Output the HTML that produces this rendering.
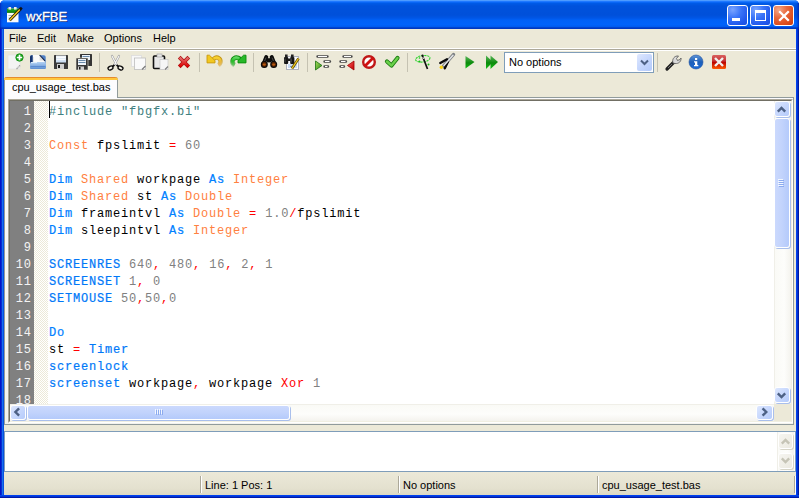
<!DOCTYPE html>
<html><head><meta charset="utf-8">
<style>
*{margin:0;padding:0;box-sizing:border-box}
html,body{width:799px;height:498px;overflow:hidden;background:#fff}
body{position:relative;font-family:"Liberation Sans",sans-serif;font-size:11px;color:#000}
.a{position:absolute}
#frame{left:0;top:0;width:799px;height:498px;border-radius:5px 5px 0 0;background:linear-gradient(90deg,#0014c8 0,#0014c8 1px,#0a2cd0 1px,#0a2cd0 2px,#1670ee 2px,#1670ee 3px,#0850e0 3px,#0850e0 796px,#0040f0 796px,#0040f0 797px,#0034d0 797px,#0034d0 798px,#0018a0 798px)}
#fbot{left:0;top:495px;width:799px;height:3px;background:linear-gradient(180deg,#0040f0 0,#0040f0 1px,#0034d4 1px,#0034d4 2px,#0018a8 2px)}
#title{left:0;top:0;width:799px;height:29px;border-radius:5px 5px 0 0;
background:linear-gradient(180deg,#4d9bff 0,#4d9bff 1px,#1e78ff 1px,#1e78ff 2px,#0866f5 2px,#0866f5 3px,#005ce8 3px,#0052dc 6px,#0050da 15px,#0056e6 18px,#0060f6 20px,#0063fb 25px,#005cf0 26px,#005cf0 27px,#0044d0 27px,#0044d0 28px,#0038c0 28px)}
#client{left:4px;top:29px;width:792px;height:466px;background:#ece9d8}
#ttext{left:26px;top:8.5px;font-size:13px;line-height:16px;color:#fff;-webkit-text-stroke:0.3px #fff;text-shadow:1px 1px 0 #0a1e6a}
.cbtn{top:5px;width:21px;height:21px;border:1px solid #fff;border-radius:3px}
.menu{top:32px;height:12px;line-height:12px}
.sep{top:53px;width:1px;height:19px;background:#c5c2b2}
.code{font-family:"Liberation Mono",monospace;font-size:12px;letter-spacing:0.8px;line-height:17px;white-space:pre}
.ln{font-family:"Liberation Mono",monospace;font-size:12px;letter-spacing:0.8px;line-height:17px;color:#f4f4f4;text-align:right;white-space:pre}
.kw{color:#0080ff;-webkit-text-stroke:0.2px #0080ff}.ty{color:#ff8040}.op{color:#ff0000}.nu{color:#808080}.pp{color:#408080}.fn{color:#0078f8;-webkit-text-stroke:0.2px #0078f8}
.sbtn{border:1px solid #fff;border-radius:3px;background:linear-gradient(135deg,#dde7fe 0,#c9d9fd 45%,#b5cbfb 100%);box-shadow:1px 1px 0 #a9bfec}
.sthumb{border:1px solid #fff;border-radius:3px;background:linear-gradient(90deg,#cbd9fd,#c2d3fc 50%,#b4cafb);box-shadow:1px 1px 0 #a9bfec}
.dbtn{border:1px solid #fff;border-radius:3px;background:linear-gradient(135deg,#f6f5f0,#ebe9e0);box-shadow:1px 1px 0 #d6d4c6}
</style></head><body>
<div id="frame" class="a"></div>
<div id="title" class="a"></div>
<div id="client" class="a"></div>
<div class="a" style="left:0;top:3px;width:4px;height:26px;background:linear-gradient(90deg,rgba(0,24,176,.75),rgba(0,30,190,.35) 1px,rgba(0,40,200,.15) 2px,rgba(0,0,0,0) 4px)"></div>
<div class="a" style="left:795px;top:3px;width:4px;height:26px;background:linear-gradient(90deg,rgba(0,0,0,0),rgba(0,40,200,.2) 2px,rgba(0,24,160,.7) 4px)"></div>
<div id="fbot" class="a"></div>
<!-- title icon -->
<svg class="a" style="left:0;top:0" width="30" height="29">
<rect x="7" y="8.5" width="11.5" height="13.8" fill="#fafafa"/>
<rect x="7" y="8.5" width="11.5" height="4.2" fill="#1c9c1c"/>
<rect x="7" y="11.5" width="11.5" height="1.2" fill="#0e7a0e"/>
<rect x="8.5" y="7" width="2.6" height="2.6" fill="#f0ece4"/><rect x="14" y="7" width="2.6" height="2.6" fill="#f0ece4"/>
<path d="M8.5 15.5h5M8.5 18h3" stroke="#9aa" stroke-width="0.8"/>
<path d="M9.6 20.2 L20.8 8.6" stroke="#1a1400" stroke-width="3"/>
<path d="M9.6 20.2 L20.8 8.6" stroke="#f4c820" stroke-width="1.5"/>
<path d="M19.8 9.6 L21.8 7.6" stroke="#111" stroke-width="2.6"/>
</svg>
<div id="ttext" class="a">wxFBE</div>

<!-- caption buttons -->
<div class="a cbtn" style="left:727px;background:radial-gradient(circle at 25% 20%,#7aa4ff 0,#3a74f8 40%,#2158ec 75%,#1a4fe0)"><div class="a" style="left:4px;top:12px;width:8px;height:3px;background:#fff"></div></div>
<div class="a cbtn" style="left:750px;background:radial-gradient(circle at 25% 20%,#7aa4ff 0,#3a74f8 40%,#2158ec 75%,#1a4fe0)"><div class="a" style="left:4px;top:4px;width:11px;height:11px;border:1px solid #fff;border-top-width:3px"></div></div>
<div class="a cbtn" style="left:773px;background:radial-gradient(circle at 25% 20%,#f4a888 0,#e8683c 40%,#dc4c1c 75%,#c83c10)">
<svg class="a" style="left:4px;top:4px" width="12" height="12"><path d="M1.2 1.2L10.8 10.8M10.8 1.2L1.2 10.8" stroke="#fff" stroke-width="2.3"/></svg></div>

<!-- menu -->
<div class="a menu" style="left:9px">File</div>
<div class="a menu" style="left:37px">Edit</div>
<div class="a menu" style="left:67px">Make</div>
<div class="a menu" style="left:104px">Options</div>
<div class="a menu" style="left:153px">Help</div>
<div class="a" style="left:4px;top:48px;width:792px;height:1px;background:#fff"></div>
<div class="a" style="left:4px;top:49px;width:792px;height:1px;background:#aca899"></div>
<div class="a" style="left:4px;top:50px;width:792px;height:1px;background:#fff"></div>

<!-- toolbar separators -->
<div class="a sep" style="left:99px"></div>
<div class="a sep" style="left:199px"></div>
<div class="a sep" style="left:253px"></div>
<div class="a sep" style="left:307px"></div>
<div class="a sep" style="left:407px"></div>
<div class="a sep" style="left:657px"></div>

<!-- combobox -->
<div class="a" style="left:504px;top:52px;width:150px;height:21px;border:1px solid #7f9db9;background:#fff"></div>
<div class="a" style="left:509px;top:56px;line-height:13px">No options</div>
<div class="a" style="left:637px;top:54px;width:15px;height:17px;border-radius:2px;background:linear-gradient(135deg,#dfe8fe 0,#c6d7fd 50%,#b3cafb 100%)"></div>
<svg class="a" style="left:640px;top:59px" width="9" height="7"><path d="M1 1.5L4.5 5L8 1.5" stroke="#4d6185" stroke-width="2" fill="none"/></svg>
<svg class="a" style="left:0;top:0" width="799" height="80" viewBox="0 0 799 80">
<defs>
<linearGradient id="gBlueTray" x1="0" y1="0" x2="0" y2="1"><stop offset="0" stop-color="#b4d2f4"/><stop offset="1" stop-color="#5d8fd2"/></linearGradient>
<linearGradient id="gLabel" x1="0" y1="0" x2="0" y2="1"><stop offset="0" stop-color="#f6f9fc"/><stop offset="1" stop-color="#c5daf0"/></linearGradient>
<linearGradient id="gGreen" x1="0" y1="0" x2="0" y2="1"><stop offset="0" stop-color="#7ccf6a"/><stop offset="1" stop-color="#1b9e12"/></linearGradient>
<linearGradient id="gPlay" x1="0" y1="0" x2="0" y2="1"><stop offset="0" stop-color="#5cb85c"/><stop offset=".55" stop-color="#0c8a0c"/><stop offset="1" stop-color="#11c011"/></linearGradient>
<linearGradient id="gRed" x1="0" y1="0" x2="0" y2="1"><stop offset="0" stop-color="#e07070"/><stop offset="1" stop-color="#e00000"/></linearGradient>
<linearGradient id="gRedBox" x1="0" y1="0" x2="0" y2="1"><stop offset="0" stop-color="#d96060"/><stop offset=".45" stop-color="#c43030"/><stop offset=".5" stop-color="#b80000"/><stop offset="1" stop-color="#ff5a00"/></linearGradient>
<linearGradient id="gInfo" x1="0" y1="0" x2="0" y2="1"><stop offset="0" stop-color="#5f95d8"/><stop offset=".5" stop-color="#1d5fb8"/><stop offset="1" stop-color="#1a6ad8"/></linearGradient>
<linearGradient id="gYel" x1="0" y1="0" x2="0" y2="1"><stop offset="0" stop-color="#fff070"/><stop offset="1" stop-color="#e0b010"/></linearGradient>
<linearGradient id="gRedTri" x1="0" y1="0" x2="1" y2="1"><stop offset="0" stop-color="#ff6060"/><stop offset="1" stop-color="#c00000"/></linearGradient>
<linearGradient id="gGreenTri" x1="0" y1="0" x2="1" y2="1"><stop offset="0" stop-color="#a8dd60"/><stop offset="1" stop-color="#2a8a10"/></linearGradient>
</defs>
<!-- new -->
<rect x="8" y="55" width="12" height="14" fill="#f3f3f3" stroke="#e0e0e0" stroke-width="0.6"/>
<path d="M16.5 69 L20 65.5" stroke="#8a8a8a" stroke-width="1.2"/>
<path d="M17 68.5 L19.5 66" stroke="#fff" stroke-width="1"/>
<circle cx="19.5" cy="57.5" r="3.7" fill="#1fa51f" stroke="#0b8a0b" stroke-width="0.8"/>
<path d="M16.8 57.5h5.4M19.5 54.8v5.4" stroke="#fff" stroke-width="1.7"/>
<!-- open -->
<rect x="30" y="55.3" width="15.7" height="13.7" rx="1.8" fill="#4f80c6"/>
<path d="M30 64 V57 Q30 55.3 31.8 55.3 H32.8 V64 Z" fill="#173670"/>
<path d="M32.8 55 H39.6 L44.8 60.6 V63 H32.8 Z" fill="#fbfbfb"/>
<path d="M39.6 55.2 V60.6 H44.6 Z" fill="#dcdcdc"/>
<path d="M39.6 55 L45 60.8" stroke="#0e1e44" stroke-width="1.1"/>
<path d="M33.5 57v5" stroke="#e4e4e4" stroke-width="0.8"/>
<rect x="30" y="62" width="16" height="7" rx="1.6" fill="url(#gBlueTray)"/>
<path d="M31 62.6h6" stroke="#e4f2ff" stroke-width="1"/>
<path d="M30.5 66.5h15" stroke="#5a8ad0" stroke-width="1"/>
<!-- save -->
<rect x="54" y="55" width="14" height="14" rx="0.6" fill="#3a3a3a"/>
<rect x="56" y="55.5" width="10" height="7" fill="url(#gLabel)"/>
<path d="M56.5 57.5h9M56.5 59.5h9" stroke="#ffffff" stroke-width="0.8"/>
<rect x="57" y="64" width="7" height="5" fill="#cfcfcf"/>
<rect x="58" y="65" width="2" height="3" fill="#1a1a1a"/>
<!-- save all -->
<rect x="80" y="54" width="12" height="12" rx="0.5" fill="#363636"/>
<rect x="82" y="55" width="8" height="5" fill="#eef4fa"/>
<path d="M82.5 56.5h7" stroke="#6a8aaa" stroke-width="1"/>
<rect x="76" y="58" width="12" height="12" rx="0.5" fill="#363636" stroke="#eceadb" stroke-width="0.6"/>
<rect x="78" y="59" width="8" height="6" fill="#eef4fa"/>
<path d="M78.5 60.5h7M78.5 62.5h7" stroke="#6a8aaa" stroke-width="1"/>
<rect x="78" y="66.5" width="6" height="3.5" fill="#cfcfcf"/>
<rect x="79" y="67" width="1.5" height="2.5" fill="#1a1a1a"/>
<!-- cut -->
<path d="M112 56 L116.5 64.5 M119 56 L114.5 64.5" stroke="#9a9a9a" stroke-width="2.2" stroke-linecap="round"/>
<path d="M112 56 L116.5 64.5 M119 56 L114.5 64.5" stroke="#fafafa" stroke-width="1.1" stroke-linecap="round"/>
<ellipse cx="110.5" cy="68" rx="2.6" ry="1.8" fill="#f4f2e8" stroke="#0a0a0a" stroke-width="1.3" transform="rotate(-25 110.5 68)"/>
<ellipse cx="120.5" cy="68" rx="2.6" ry="1.8" fill="#f4f2e8" stroke="#0a0a0a" stroke-width="1.3" transform="rotate(25 120.5 68)"/>
<path d="M112.5 66.5 L114.5 65 M118.5 66.5 L116.5 65" stroke="#0a0a0a" stroke-width="1.6"/>
<!-- copy -->
<rect x="131.5" y="55.5" width="10" height="11" fill="#f8f8f8" stroke="#dcdcdc" stroke-width="0.8"/>
<rect x="134.5" y="58" width="11" height="11.5" fill="#fafafa" stroke="#bdbdbd" stroke-width="0.8"/>
<path d="M142 69.5 L145.5 66" stroke="#7a7a7a" stroke-width="1.2"/>
<!-- paste -->
<rect x="153.5" y="56" width="11" height="12.5" rx="1" fill="#e8e8e8" stroke="#101010" stroke-width="1.6"/>
<rect x="157" y="54" width="5" height="3" fill="#e6e6e6" stroke="#9a9a9a" stroke-width="0.6"/>
<rect x="160" y="59.5" width="8" height="10" fill="#f6f6f6" stroke="#c8c8c8" stroke-width="0.7"/>
<path d="M165 69.5 L168 66.5" stroke="#7a7a7a" stroke-width="1.1"/>
<!-- delete -->
<path d="M179.2 57.2 L188.8 66.8 M188.8 57.2 L179.2 66.8" stroke="#b01010" stroke-width="3.8"/>
<path d="M179.6 57.6 L188.4 66.4 M188.4 57.6 L179.6 66.4" stroke="url(#gRed)" stroke-width="2.4"/>
<!-- undo -->
<linearGradient id="gUndoFade" gradientUnits="userSpaceOnUse" x1="0" y1="58" x2="0" y2="68"><stop offset="0" stop-color="#c49410"/><stop offset="1" stop-color="#c49410" stop-opacity="0.15"/></linearGradient>
<linearGradient id="gUndoFill" gradientUnits="userSpaceOnUse" x1="0" y1="58" x2="0" y2="68"><stop offset="0" stop-color="#f6d030"/><stop offset="1" stop-color="#f0a040" stop-opacity="0.2"/></linearGradient>
<path d="M212.54 61.04 A4 4 0 1 1 218.38 65.13" fill="none" stroke="url(#gUndoFade)" stroke-width="4.4"/>
<path d="M212.54 61.04 A4 4 0 1 1 218.38 65.13" fill="none" stroke="url(#gUndoFill)" stroke-width="2.6"/>
<path d="M207 55.2 H209.4 L215 60.6 V62.9 H207 Z" fill="#f2c820" stroke="#c89810" stroke-width="0.9"/>
<!-- redo -->
<linearGradient id="gRedoFade" gradientUnits="userSpaceOnUse" x1="0" y1="58" x2="0" y2="68"><stop offset="0" stop-color="#0a8e0a"/><stop offset="1" stop-color="#0a8e0a" stop-opacity="0.1"/></linearGradient>
<linearGradient id="gRedoFill" gradientUnits="userSpaceOnUse" x1="0" y1="56" x2="0" y2="68"><stop offset="0" stop-color="#7ee07e"/><stop offset=".4" stop-color="#22c022"/><stop offset="1" stop-color="#60c060" stop-opacity="0.15"/></linearGradient>
<path d="M240.46 61.04 A4 4 0 1 0 234.62 65.13" fill="none" stroke="url(#gRedoFade)" stroke-width="4.6"/>
<path d="M240.46 61.04 A4 4 0 1 0 234.62 65.13" fill="none" stroke="url(#gRedoFill)" stroke-width="2.8"/>
<path d="M246 55.2 H243.6 L238 60.6 V62.9 H246 Z" fill="#28b828" stroke="#0a8a0a" stroke-width="0.9"/>
<!-- find -->
<path d="M266.3 57 L263.8 63.5 M271.7 57 L274.2 63.5" stroke="#0c0c0c" stroke-width="4" stroke-linecap="round"/>
<path d="M266 57.6 L264.6 61 M272 57.6 L273.4 61" stroke="#5a5a5a" stroke-width="0.8"/>
<rect x="267" y="58.2" width="4" height="4.2" fill="#0c0c0c"/>
<circle cx="264.3" cy="64.4" r="2.9" fill="#5e2600" stroke="#0c0c0c" stroke-width="1.2"/>
<circle cx="273.7" cy="64.4" r="2.9" fill="#5e2600" stroke="#0c0c0c" stroke-width="1.2"/>
<ellipse cx="264.3" cy="64.6" rx="1.6" ry="1.1" fill="#b85a12"/>
<ellipse cx="273.7" cy="64.6" rx="1.6" ry="1.1" fill="#b85a12"/>
<!-- replace -->
<rect x="286.5" y="56.5" width="12" height="13" fill="#fafafe" stroke="#a8acb8" stroke-width="0.9"/>
<rect x="288" y="64" width="9" height="4" fill="#c8dcf4"/>
<path d="M290 66.5h5" stroke="#7a8aa0" stroke-width="0.8"/>
<rect x="284" y="57" width="4.2" height="7" rx="1" fill="#141414"/>
<rect x="290.2" y="57" width="4.2" height="7" rx="1" fill="#141414"/>
<rect x="285" y="54.5" width="2.6" height="3" fill="#222"/>
<rect x="291" y="54.5" width="2.6" height="3" fill="#222"/>
<rect x="287.5" y="58.5" width="3.2" height="2.5" fill="#1a1a1a"/>
<path d="M285 58.5v4M291.2 58.5v4" stroke="#666" stroke-width="0.7"/>
<path d="M292 68.5 L298.5 58.5" stroke="#5a4600" stroke-width="2.6"/>
<path d="M292 68.5 L298.5 58.5" stroke="#f2cc22" stroke-width="1.3"/>
<!-- block comment -->
<path d="M317.5 56.5h10M324.5 61.5h5.5M324.5 66.5h3.5" stroke="#4a4a4a" stroke-width="2.4" stroke-linecap="round"/>
<path d="M318 56.5h9M325 61.5h4.5M325 66.5h2.5" stroke="#fff" stroke-width="1"/>
<path d="M315.5 61 L322 65.5 L315.5 70 Z" fill="url(#gGreenTri)" stroke="#1a7010" stroke-width="0.8"/>
<!-- uncomment -->
<path d="M343.5 56.5h8M340.5 61.5h5.5M340.5 66.5h3.5" stroke="#4a4a4a" stroke-width="2.4" stroke-linecap="round"/>
<path d="M344 56.5h7M341 61.5h4.5M341 66.5h2.5" stroke="#fff" stroke-width="1"/>
<path d="M354 61 L347.5 65.5 L354 70 Z" fill="url(#gRedTri)" stroke="#a00000" stroke-width="0.8"/>
<!-- stop -->
<circle cx="369" cy="62" r="5.8" fill="#fff" stroke="#c01818" stroke-width="2.4"/>
<path d="M365 66 L373 58" stroke="#d01010" stroke-width="2.8"/>
<!-- check -->
<path d="M387 61.5 L391.5 65.5 L397.5 58" fill="none" stroke="#1a7a10" stroke-width="4.2" stroke-linecap="round" stroke-linejoin="round"/>
<path d="M387 61.5 L391.5 65.5 L397.5 58" fill="none" stroke="#6ad04a" stroke-width="2.4" stroke-linecap="round" stroke-linejoin="round"/>
<!-- wand -->
<ellipse cx="422.8" cy="58.8" rx="7.2" ry="3.2" fill="none" stroke="#2ed42e" stroke-width="1.1" stroke-dasharray="2.2 0.8" transform="rotate(-8 422.8 58.8)"/>
<path d="M422.5 56 L427.5 69" stroke="#111" stroke-width="1.7"/>
<path d="M422.8 57 L423.6 59" stroke="#ddd" stroke-width="1"/>
<circle cx="422.5" cy="55.5" r="1.1" fill="#111"/>
<circle cx="419.5" cy="61.5" r="1" fill="#18c018"/>
<circle cx="428.5" cy="64.5" r="1" fill="#18c018"/>
<circle cx="419.5" cy="58" r="0.8" fill="#18c018"/>
<!-- rocket -->
<path d="M443.5 66 L453.5 54.5" stroke="#7a7e82" stroke-width="3.4" stroke-linecap="round"/>
<path d="M440.3 63 L447 59.3" stroke="#0a0a0a" stroke-width="2.4" stroke-linecap="round"/>
<path d="M444.8 68.3 L448 61.5" stroke="#0a0a0a" stroke-width="2.4" stroke-linecap="round"/>
<path d="M444 65.5 L453 55.2" stroke="#e2e4e6" stroke-width="1.5" stroke-linecap="round"/>
<circle cx="441.3" cy="67.3" r="1.7" fill="#f8d010"/>
<!-- play -->
<path d="M465.5 56 L474.5 62 L465.5 68.5 Z" fill="url(#gPlay)"/>
<!-- ff -->
<path d="M486 55.5 L493 62 L486 69 Z" fill="url(#gPlay)"/>
<path d="M490.5 55.5 L498 62 L490.5 69 Z" fill="url(#gPlay)"/>
<!-- wrench -->
<path d="M667 69 L674 62" stroke="#222" stroke-width="3.2" stroke-linecap="round"/>
<path d="M668 68 L672 64" stroke="#777" stroke-width="1"/>
<path d="M673 63 C 672 60, 673.5 56.5, 677 56 L678.5 56 L676.5 58.5 L677.5 60.5 L680 59.5 L681 58 C 681.5 61, 679 64, 675 63.5 Z" fill="#d8d8d8" stroke="#555" stroke-width="0.8"/>
<!-- info -->
<circle cx="696" cy="62" r="7" fill="url(#gInfo)" stroke="#2050a0" stroke-width="0.6"/>
<rect x="695" y="58" width="2.2" height="2" fill="#fff"/>
<path d="M694 61.3 H697.3 V65 H698.3 V66.3 H694 V65 H695 V62.5 H694 Z" fill="#fff"/>
<!-- red x box -->
<rect x="712" y="55" width="14" height="14" rx="1.5" fill="url(#gRedBox)"/>
<path d="M715 58 L723 66 M723 58 L715 66" stroke="#f0f0f0" stroke-width="2.4"/>
</svg>
<!-- tab page -->
<div class="a" style="left:4px;top:97px;width:790px;height:328px;background:linear-gradient(180deg,#fcfcfe,#f4f3ee);border:1px solid #919b9c"></div>
<div class="a" style="left:4px;top:77px;width:114px;height:21px;background:#fcfcfe;border-left:1px solid #919b9c;border-right:1px solid #919b9c;border-radius:3px 3px 0 0"></div>
<div class="a" style="left:4px;top:77px;width:114px;height:3px;background:linear-gradient(#e68b2c 0,#e68b2c 1px,#ffc73c 1px);border-radius:3px 3px 0 0"></div>
<div class="a" style="left:12px;top:81px;line-height:12px">cpu_usage_test.bas</div>

<!-- editor -->
<div class="a" style="left:8px;top:99px;width:785px;height:324px;border:1px solid;border-color:#aca899 #fff #fff #aca899"></div>
<div class="a" style="left:9px;top:100px;width:783px;height:322px;border:1px solid;border-color:#716f64 #f1efe2 #f1efe2 #716f64;background:#fff;overflow:hidden">
  <div class="a" style="left:0;top:0;width:24px;height:320px;background:#808080"></div>
  <div class="a" style="left:24px;top:0;width:14px;height:320px;background:repeating-conic-gradient(#ece9d8 0 25%,#fff 0 50%) 0 0/2px 2px"></div>
  <div class="a ln" style="left:0;top:2.5px;width:21.8px">1
2
3
4
5
6
7
8
9
10
11
12
13
14
15
16
17
18</div>
  <div class="a code" style="left:39px;top:2.5px"><span class="pp">#include "fbgfx.bi"</span>

<span class="ty">Const</span> fpslimit <span class="op">=</span> <span class="nu">60</span>

<span class="kw">Dim</span> <span class="ty">Shared</span> workpage <span class="kw">As</span> <span class="ty">Integer</span>
<span class="kw">Dim</span> <span class="ty">Shared</span> st <span class="kw">As</span> <span class="ty">Double</span>
<span class="kw">Dim</span> frameintvl <span class="kw">As</span> <span class="ty">Double</span> <span class="op">=</span> <span class="nu">1.0</span><span class="op">/</span>fpslimit
<span class="kw">Dim</span> sleepintvl <span class="kw">As</span> <span class="ty">Integer</span>

<span class="fn">SCREENRES</span> <span class="nu">640</span><span class="op">,</span> <span class="nu">480</span><span class="op">,</span> <span class="nu">16</span><span class="op">,</span> <span class="nu">2</span><span class="op">,</span> <span class="nu">1</span>
<span class="fn">SCREENSET</span> <span class="nu">1</span><span class="op">,</span> <span class="nu">0</span>
<span class="fn">SETMOUSE</span> <span class="nu">50</span><span class="op">,</span><span class="nu">50</span><span class="op">,</span><span class="nu">0</span>

<span class="kw">Do</span>
st <span class="op">=</span> <span class="fn">Timer</span>
<span class="fn">screenlock</span>
<span class="fn">screenset</span> workpage<span class="op">,</span> workpage <span class="op">Xor</span> <span class="nu">1</span>
</div>
  <div class="a" style="left:39px;top:0;width:1px;height:17px;background:#000"></div>
</div>

<!-- scrollbars (page coords) -->
<div class="a" style="left:774px;top:101px;width:17px;height:303px;background:linear-gradient(90deg,#f0efe8 0,#f0efe8 1px,#fafaf6 1px,#fdfdfb 60%,#f4f3ee)"></div>
<div class="a" style="left:10px;top:404px;width:764px;height:17px;background:linear-gradient(180deg,#f0efe8 0,#f0efe8 1px,#fafaf6 1px,#fdfdfb 60%,#f4f3ee)"></div>
<div class="a" style="left:774px;top:404px;width:17px;height:17px;background:#ece9d8"></div>
<div class="a sbtn" style="left:774px;top:101px;width:16px;height:16px"></div>
<svg class="a" style="left:776px;top:104px" width="12" height="10"><path d="M1.8 7.6L5.5 3.9L9.2 7.6" stroke="#4d6185" stroke-width="2.4" fill="none"/></svg>
<div class="a sthumb" style="left:774px;top:118px;width:16px;height:130px"></div>
<svg class="a" style="left:777px;top:178px" width="9" height="10"><path d="M1 1.5h5M1 3.5h5M1 5.5h5M1 7.5h5" stroke="#f2f6ff" stroke-width="1"/><path d="M2 2.5h5M2 4.5h5M2 6.5h5M2 8.5h5" stroke="#8cabef" stroke-width="1"/></svg>
<div class="a sbtn" style="left:774px;top:387px;width:16px;height:16px"></div>
<svg class="a" style="left:776px;top:391px" width="12" height="10"><path d="M1.8 2.4L5.5 6.1L9.2 2.4" stroke="#4d6185" stroke-width="2.4" fill="none"/></svg>
<div class="a sbtn" style="left:10px;top:405px;width:16px;height:15px"></div>
<svg class="a" style="left:12px;top:407px" width="10" height="11"><path d="M7.1 1.3L3.4 5L7.1 8.7" stroke="#4d6185" stroke-width="2.4" fill="none"/></svg>
<div class="a sthumb" style="left:27px;top:405px;width:263px;height:15px;background:linear-gradient(180deg,#cbd9fd,#c2d3fc 50%,#b4cafb)"></div>
<svg class="a" style="left:154px;top:408px" width="10" height="9"><path d="M1.5 1v5M3.5 1v5M5.5 1v5M7.5 1v5" stroke="#f2f6ff" stroke-width="1"/><path d="M2.5 2v5M4.5 2v5M6.5 2v5M8.5 2v5" stroke="#8cabef" stroke-width="1"/></svg>
<div class="a sbtn" style="left:756px;top:405px;width:17px;height:15px"></div>
<svg class="a" style="left:760px;top:407px" width="10" height="11"><path d="M2.6 1.3L6.3 5L2.6 8.7" stroke="#4d6185" stroke-width="2.4" fill="none"/></svg>

<!-- output pane -->
<div class="a" style="left:4px;top:431px;width:792px;height:41px;border:1px solid #7f9db9;background:#fff"></div>
<div class="a" style="left:777px;top:432px;width:17px;height:39px;background:linear-gradient(90deg,#f0efe8 0,#f0efe8 1px,#fbfbf8 1px,#fdfdfb 60%,#f4f3ee)"></div>
<div class="a dbtn" style="left:778px;top:433px;width:15px;height:16px"></div>
<svg class="a" style="left:780px;top:436px" width="12" height="10"><path d="M1.8 7.6L5.5 3.9L9.2 7.6" stroke="#c6c4b6" stroke-width="2.4" fill="none"/></svg>
<div class="a dbtn" style="left:778px;top:453px;width:15px;height:16px"></div>
<svg class="a" style="left:780px;top:456px" width="12" height="10"><path d="M1.8 2.4L5.5 6.1L9.2 2.4" stroke="#c6c4b6" stroke-width="2.4" fill="none"/></svg>

<!-- status bar -->
<div class="a" style="left:4px;top:472px;width:792px;height:23px;background:linear-gradient(180deg,#ece9d8,#e4e1cf 70%,#dcd8c4)"></div>
<div class="a" style="left:200px;top:476px;width:2px;height:17px;border-left:1px solid #aca899;border-right:1px solid #fff"></div>
<div class="a" style="left:398px;top:476px;width:2px;height:17px;border-left:1px solid #aca899;border-right:1px solid #fff"></div>
<div class="a" style="left:597px;top:476px;width:2px;height:17px;border-left:1px solid #aca899;border-right:1px solid #fff"></div>
<div class="a" style="left:794px;top:476px;width:1px;height:17px;background:#aca899"></div>
<div class="a" style="left:795px;top:476px;width:1px;height:18px;background:#fff"></div>
<div class="a" style="left:205px;top:479px;line-height:12px">Line: 1 Pos: 1</div>
<div class="a" style="left:403px;top:479px;line-height:12px">No options</div>
<div class="a" style="left:602px;top:479px;line-height:12px">cpu_usage_test.bas</div>
</body></html>
